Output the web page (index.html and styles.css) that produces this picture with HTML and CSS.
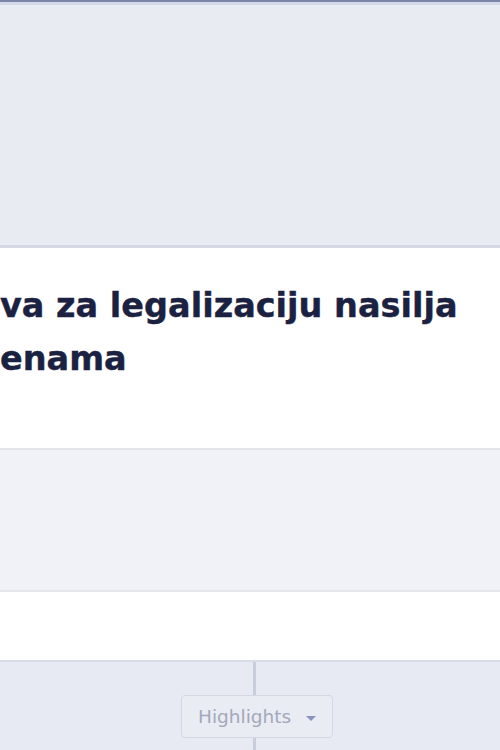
FILE: index.html
```html
<!DOCTYPE html>
<html lang="hr">
<head>
    <meta charset="UTF-8">
    <title>Inicijativa za legalizaciju nasilja nad ženama</title>
    <link rel="stylesheet" href="styles.css">
</head>
<body>

    <div class="topbar"></div>

    <div class="cover"></div>

    <div class="titlebox">
        <h1 class="title">va za legalizaciju nasilja<br>enama</h1>
    </div>

    <div class="info"></div>

    <div class="blank"></div>

    <div class="timeline">
        <div class="spine"></div>
        <div class="highlights">Highlights <span class="arrow"></span></div>
    </div>

</body>
</html>
```

FILE: styles.css
```css
/*初始化*/
html,body{
    margin: 0;
    padding: 0;
}
body{
    font-family: "DejaVu Sans", "Liberation Sans", sans-serif;
    background-color: #e7eaf3;
}

/*1.顶部的蓝条*/
.topbar{
    height: 2px;
    background-color: #7a84a9;
    border-bottom: 3px solid #d3d9e7;
}

/*2.封面区域*/
.cover{
    height: 240px;
    background-color: #e9ebf3;
    border-bottom: 3px solid #d5d9e5;
}

/*3.标题*/
.titlebox{
    height: 202px;
    box-sizing: border-box;
    padding-top: 31px;
    background-color: #fff;
    border-bottom: 2px solid #e3e5ed;
}
.title{
    margin: 0;
    font-size: 33.5px;
    line-height: 53px;
    font-weight: bold;
    color: #1b2241;
    -webkit-text-stroke: 0.4px #1b2241;
    white-space: nowrap;
}

/*4.信息栏*/
.info{
    height: 140px;
    background-color: #f1f2f7;
    border-bottom: 2px solid #e5e7ef;
}

.blank{
    height: 68px;
    background-color: #fff;
    border-bottom: 2px solid #d9dde8;
}

/*5.时间线*/
.timeline{
    height: 88px;
    position: relative;
    padding-top: 33px;
    box-sizing: border-box;
}
.spine{
    position: absolute;
    left: 253px;
    top: 0;
    bottom: 0;
    width: 3px;
    background-color: #c8cddc;
}
.highlights{
    position: relative;
    width: 152px;
    height: 43px;
    margin-left: 181px;
    box-sizing: border-box;
    border: 1px solid #d3d7e3;
    border-radius: 4px;
    background-color: #eaecf3;

    line-height: 41px;
    padding-left: 16px;
    font-size: 18.5px;
    color: #a3a8bb;
}
.arrow{
    display: inline-block;
    margin-left: 9px;
    vertical-align: middle;
    border-left: 5px solid transparent;
    border-right: 5px solid transparent;
    border-top: 5px solid #8a93c0;
}
```
